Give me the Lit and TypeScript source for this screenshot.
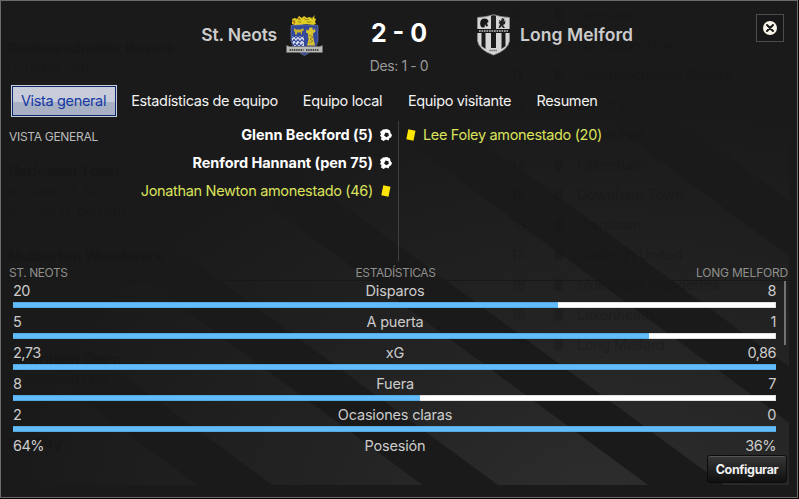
import { LitElement, html, css, svg } from 'lit';
import { customElement, property, state } from 'lit/decorators.js';
import { classMap } from 'lit/directives/class-map.js';

type MatchEvent = { kind: 'goal' | 'card'; text: string };
type Stat = { label: string; home: string; away: string; share?: number };

const TABS = [
  { label: 'Vista general', width: 106 },
  { label: 'Estadísticas de equipo', width: 167 },
  { label: 'Equipo local', width: 100 },
  { label: 'Equipo visitante', width: 125 },
  { label: 'Resumen', width: 81 },
];

const HOME_EVENTS: MatchEvent[] = [
  { kind: 'goal', text: 'Glenn Beckford (5)' },
  { kind: 'goal', text: 'Renford Hannant (pen 75)' },
  { kind: 'card', text: 'Jonathan Newton amonestado (46)' },
];

const AWAY_EVENTS: MatchEvent[] = [
  { kind: 'card', text: 'Lee Foley amonestado (20)' },
];

const STATS: Stat[] = [
  { label: 'Disparos', home: '20', away: '8', share: 20 / 28 },
  { label: 'A puerta', home: '5', away: '1', share: 5 / 6 },
  { label: 'xG', home: '2,73', away: '0,86', share: 1 },
  { label: 'Fuera', home: '8', away: '7', share: 8 / 15 },
  { label: 'Ocasiones claras', home: '2', away: '0', share: 1 },
  { label: 'Posesión', home: '64%', away: '36%' },
];

const LEAGUE_TABLE = [
  'Dereham', 'Harleston Town', 'Godmanchester Rovers', 'Ely City', 'Mildenhall', 'Fakenham',
  'Downham Town', 'Brantham', 'Hadleigh United', 'Mulbarton Wanderers', 'Lakenheath', 'Long Melford',
];

const RESULTS = [
  { top: 37, team: 'Godmanchester Rovers', scorers: ['H. Bakar (44)'] },
  { top: 160, team: 'Harleston Town', scorers: ['N. Stone (1, 88)', 'K. Crisp (1, pen 80)'] },
  { top: 245, team: 'Mulbarton Wanderers', scorers: [] },
  { top: 348, team: 'Downham Town', scorers: ['R. McQuaid (48)'] },
  { top: 433, team: 'Ely City', scorers: [] },
];

// The league screen that shows faintly through the dialog
@customElement('match-backdrop')
class MatchBackdrop extends LitElement {
  static styles = css`
    :host {
      position: absolute;
      inset: 0;
      overflow: hidden;
      font-size: 14.5px;
      line-height: 20px;
      color: #151515;
    }
    svg {
      position: absolute;
      left: -1px;
      top: -1px;
    }
    .table {
      position: absolute;
      left: 510px;
      top: -1px;
    }
    .place {
      display: grid;
      grid-template-columns: 43px 23px auto;
      align-items: center;
      height: 30px;
      letter-spacing: -0.3px;
    }
    .badge {
      width: 9px;
      height: 12px;
      border-radius: 2px 2px 5px 5px;
      background: #161616;
    }
    .result {
      position: absolute;
      left: 7px;
    }
    .team {
      font-weight: 700;
    }
    .scorer {
      font-size: 13px;
    }
    .table,
    .scorer {
      opacity: 0.35;
    }
    .team {
      opacity: 0.5;
    }
  `;

  render() {
    return html`
      <svg width="798" height="497" viewBox="0 0 798 497">
        <defs>
          <radialGradient id="glow" gradientUnits="userSpaceOnUse" cx="610" cy="510" r="600"
            gradientTransform="translate(610 510) scale(1 .68) translate(-610 -510)">
            <stop offset="0" stop-color="#fff" stop-opacity=".088" />
            <stop offset=".45" stop-color="#fff" stop-opacity=".042" />
            <stop offset="1" stop-color="#fff" stop-opacity="0" />
          </radialGradient>
          <clipPath id="area"><path d="M8 120H789V485H8Z" /></clipPath>
        </defs>
        <g clip-path="url(#area)" fill="url(#glow)">
          ${[47, 272.5, 498, 724, 950, 1176].map(
            (x) => svg`<path d="M${x} 485h150l-496 -365h-150Z" />`
          )}
        </g>
      </svg>
      ${RESULTS.map(
        (r) => html`
          <div class="result" style="top: ${r.top}px">
            <div class="team">${r.team}</div>
            ${r.scorers.map((s) => html`<div class="scorer">${s}</div>`)}
          </div>
        `
      )}
      <div class="table">
        ${LEAGUE_TABLE.map(
          (team, i) => html`
            <div class="place"><span>${i + 9}</span><i class="badge"></i><span>${team}</span></div>
          `
        )}
      </div>
    `;
  }
}

@customElement('stat-row')
class StatRow extends LitElement {
  @property({ type: Object }) stat!: Stat;

  static styles = css`
    :host {
      display: block;
      height: 31px;
    }
    .values {
      display: grid;
      grid-template-columns: 1fr auto 1fr;
      height: 21px;
      line-height: 20px;
      font-size: 14.5px;
      letter-spacing: -0.5px;
      color: #ccc;
    }
    .label {
      padding-left: 1px;
      letter-spacing: -0.2px;
    }
    .away {
      text-align: right;
    }
    .bar {
      height: 6px;
      background: #fff;
      box-shadow: inset 0 0 0 1px #e0e0e0;
    }
    .fill {
      height: 6px;
      background: #62bcfb;
      box-shadow: inset 0 1px #55a9e2, inset 0 -1px #55a9e2;
    }
  `;

  render() {
    const { label, home, away, share } = this.stat;
    return html`
      <div class="values">
        <span>${home}</span><span class="label">${label}</span><span class="away">${away}</span>
      </div>
      ${share
        ? html`<div class="bar"><div class="fill" style="width: ${share * 100}%"></div></div>`
        : ''}
    `;
  }
}

@customElement('app-root')
class AppRoot extends LitElement {
  @state() activeTab = 0;

  static styles = css`
    :host {
      display: block;
      height: 499px;
      background: #050505;
      font-family: Inter, 'Open Sans', sans-serif;
      overflow: hidden;
    }
    * {
      box-sizing: border-box;
    }
    .dialog {
      position: relative;
      width: 798px;
      height: 498px;
      border: 1px solid #6b6b6b;
      background: #1a1a1a;
    }
    .content {
      position: relative;
      display: flex;
      flex-direction: column;
      height: 100%;
    }
    header {
      display: grid;
      grid-template-columns: 322px 152px 1fr;
      height: 84px;
      padding-top: 13px;
    }
    .side {
      display: flex;
      align-items: flex-start;
      gap: 9px;
      font-size: 17.5px;
      font-weight: 600;
      line-height: 42px;
      color: #ccc;
    }
    .home {
      justify-content: flex-end;
      letter-spacing: -0.15px;
    }
    .away {
      padding-left: 2px;
      gap: 10px;
      letter-spacing: 0.07px;
    }
    .score {
      text-align: center;
    }
    .goals {
      font-size: 25px;
      font-weight: 700;
      line-height: 38px;
      color: #fff;
    }
    .half {
      padding-top: 4px;
      font-size: 14px;
      line-height: 20px;
      letter-spacing: -0.4px;
      color: #999;
    }
    .close {
      display: grid;
      place-items: center;
      width: 28px;
      height: 28px;
      margin-left: auto;
      margin-right: 13px;
      padding: 0;
      border: 1px solid #4c4c4c;
      background: #171717;
    }
    nav {
      display: flex;
      gap: 4.5px;
      height: 36px;
      padding-left: 10px;
    }
    .tab {
      height: 32px;
      padding: 0 1px 2px 0;
      border: 1px solid transparent;
      background: none;
      font: 14.5px Inter, sans-serif;
      letter-spacing: -0.35px;
      color: #f2f2f2;
      white-space: nowrap;
    }
    .tab.active {
      border-color: #c9cdda;
      box-shadow: inset 0 0 0 1px #10296b;
      background: linear-gradient(#c8ccd8 53%, #a8b0c4 53%);
      color: #1538a5;
    }
    .events {
      display: grid;
      grid-template-columns: 112px 1fr 399px;
      height: 140px;
    }
    .caption {
      font-size: 12px;
      line-height: 16px;
      letter-spacing: -0.43px;
      color: #bbb;
    }
    .events .caption {
      padding: 8px 0 0 8px;
      letter-spacing: -0.3px;
      white-space: nowrap;
    }
    .event {
      display: flex;
      align-items: center;
      height: 28px;
      gap: 7px;
      font-size: 14.5px;
      letter-spacing: -0.33px;
      white-space: nowrap;
    }
    .event span {
      padding-bottom: 1px;
    }
    .list.left {
      padding-right: 6px;
    }
    .left .event {
      flex-direction: row-reverse;
    }
    .list.right {
      border-left: 1px solid #3f3f3f;
      padding-left: 6px;
    }
    .right .event {
      gap: 6px;
    }
    .goal {
      font-weight: 700;
      letter-spacing: -0.06px;
      color: #fff;
    }
    .card {
      color: #dbe35c;
    }
    .stats-head {
      display: grid;
      grid-template-columns: 1fr auto 1fr;
      padding: 4px 9px 0 8px;
      height: 19px;
    }
    .stats-head .caption {
      color: #8f8f8c;
    }
    .stats-head .caption:nth-child(2) {
      padding-right: 6px;
    }
    .stats-head .caption:last-child {
      letter-spacing: -0.2px;
      text-align: right;
    }
    .stats {
      display: flex;
      height: 175px;
      border-top: 1px solid #181818;
    }
    .rows {
      width: 763px;
      margin-left: 12px;
    }
    .thumb {
      width: 2px;
      height: 64px;
      margin-left: 8px;
      background: #737373;
    }
    .configure {
      align-self: flex-end;
      width: 80px;
      height: 28px;
      margin-right: 10px;
      padding: 0;
      border: 1px solid #0c0c0c;
      border-radius: 3px;
      box-shadow: inset 0 1px #555;
      background: linear-gradient(#363636, #101010);
      font: 700 12.5px Inter, sans-serif;
      letter-spacing: -0.35px;
      color: #f0f0f0;
    }
  `;

  render() {
    return html`
      <div class="dialog">
        <match-backdrop></match-backdrop>
        <div class="content">
          ${this.renderHeader()} ${this.renderTabs()} ${this.renderEvents()} ${this.renderStats()}
          <button class="configure">Configurar</button>
        </div>
      </div>
    `;
  }

  renderHeader() {
    return html`
      <header>
        <div class="side home"><span>St. Neots</span>${this.renderHomeCrest()}</div>
        <div class="score">
          <div class="goals">2 - 0</div>
          <div class="half">Des: 1 - 0</div>
        </div>
        <div class="side away">
          ${this.renderAwayCrest()}<span>Long Melford</span>
          <button class="close" aria-label="Cerrar">
            <svg width="14" height="14" viewBox="0 0 14 14">
              <circle cx="7" cy="7" r="7" fill="#f8f4ea" />
              <path d="M4 4l6 6M10 4l-6 6" stroke="#171717" stroke-width="2" stroke-linecap="round" />
            </svg>
          </button>
        </div>
      </header>
    `;
  }

  renderHomeCrest() {
    return html`
      <svg width="37" height="42" viewBox="0 0 37 42">
        <path d="M6 10L6 5l3-1 2 1 2-3 3 2 2-2 3 2 2-1 3 1 3-3-1 3 2 1-1 3 1 2-3 1-7-1-9 2Z" fill="#e0cc22" />
        <path d="M6 6l3 1-1 2M12 5l3 1M18 4l2 2 3-1M25 4l2 1M12 8h3M21 8h4" fill="none" stroke="#7d6a14" stroke-width=".7" />
        <path d="M6 7l3 1-1 2M14 4l-2 1" fill="none" stroke="#c2602b" />
        <path d="M5 11.500Q18 10 32 11.500V27Q30 36 18.500 41.500Q7 36 5 27Z" fill="#34489b" stroke="#7780a6" stroke-width=".6" />
        <path d="M8 14l2 1.500h5l2-1.500 1 2-2 1.500v3h-1v-2h-4v2H9v-3H8Z" fill="#c7b02c" />
        <path d="M6 22h12v10H8L6 27Z" fill="#dce0ee" />
        <path d="M6 24l2-2.500 2 2.500 2-2.500 2 2.500 2-2.500 2 2.500M6 28l2-2.500 2 2.500 2-2.500 2 2.500 2-2.500 2 2.500M7 32l2-2.500 2 2.500 2-2.500 2 2.500 2-2.500" fill="none" stroke="#34489b" stroke-width="1.200" />
        <path d="M23.500 13.500h3l.5 3 2-2 .5 3-2.500 2 .5 5 1.500 7h-8l1.500-6-.5-6-2-1 .5-3 2 1Z" fill="#d8c230" />
        <path d="M23 21l4 2-3 2 3 2-4 2" fill="none" stroke="#76692e" stroke-width=".7" />
        <path d="M.5 31.500l3 1h30l3-1v7h-36Z" fill="#b9b9b5" stroke="#666" stroke-width=".6" />
        <path d="M3.500 36h14M20 36h13" stroke="#4b4b4b" stroke-width="2" stroke-dasharray="1.500 .7" />
      </svg>
    `;
  }

  renderAwayCrest() {
    return html`
      <svg width="33" height="42" viewBox="0 0 33 42">
        <path d="M.6 3.500Q10 3 16.500 .7Q23 3 32.400 3.500V27Q31 36 16.500 41Q2 36 .6 27Z" fill="#d6d6d6" stroke="#999" stroke-width=".8" />
        <path d="M14 2l2.500-1L19 2v14h-5Z" fill="#222" />
        <path d="M4.500 19H8.500v16l-4-3ZM14 19h5v15h-5ZM24.500 19h4v13l-4 3Z" fill="#1b1b1b" />
        <path d="M0 15h33v4H0Z" fill="#171717" />
        <path d="M2 17h29" stroke="#c4c4c4" stroke-width="1.400" stroke-dasharray="1.700 .8" />
        <path d="M3.500 12Q2 4.500 7.500 4.500q4 0 4 3.500l-1.500 1 1 3-2 .5-1-2.500-.5 3.500H5Z" fill="#181818" />
        <path d="M22 6l2 1 1-3 2.500 1-1 3 2-2-.5 4-2 1 2 3h-2l-1.500-2-1.500 2h-1.500l1.500-4-1.500-1 1-1Z" fill="#222" />
        <path d="M12.500 36.500h8" stroke="#555" stroke-width="1.500" stroke-dasharray="1.200 .8" />
      </svg>
    `;
  }

  renderTabs() {
    return html`
      <nav>
        ${TABS.map(
          (tab, i) => html`
            <button
              class=${classMap({ tab: true, active: i === this.activeTab })}
              style="width: ${tab.width}px"
              @click=${() => (this.activeTab = i)}
            >
              ${tab.label}
            </button>
          `
        )}
      </nav>
    `;
  }

  renderEvents() {
    return html`
      <section class="events">
        <div class="caption">VISTA GENERAL</div>
        <div class="list left">${HOME_EVENTS.map((e) => this.renderEvent(e))}</div>
        <div class="list right">${AWAY_EVENTS.map((e) => this.renderEvent(e))}</div>
      </section>
    `;
  }

  renderEvent(event: MatchEvent) {
    return html`
      <div class="event ${event.kind}">
        ${event.kind === 'goal' ? this.renderBall() : this.renderCard()}
        <span>${event.text}</span>
      </div>
    `;
  }

  renderBall() {
    return html`
      <svg width="12" height="12" viewBox="0 0 12 12">
        <path d="M3 .5L7 0l3 1.500L10.500 4 12 6l-1 2.500L9.500 9 8.500 11.500 6 10.500 3.500 12 1 10.500 1.500 8 0 7 1 5 0 3Z" fill="#fff" />
        <path d="M5.500 3.500l3 .7.300 2.500L6.500 8.300 4 6.500Z" fill="#1a1a1a" />
      </svg>
    `;
  }

  renderCard() {
    return html`
      <svg width="12" height="12" viewBox="0 0 12 12">
        <path d="M3.300 .3l7.200 1.500-2 9.900-7.200-1.500Z" fill="#ffe600" />
      </svg>
    `;
  }

  renderStats() {
    return html`
      <div class="stats-head">
        <span class="caption">ST. NEOTS</span>
        <span class="caption">ESTADÍSTICAS</span>
        <span class="caption">LONG MELFORD</span>
      </div>
      <section class="stats">
        <div class="rows">${STATS.map((s) => html`<stat-row .stat=${s}></stat-row>`)}</div>
        <div class="thumb"></div>
      </section>
    `;
  }
}
